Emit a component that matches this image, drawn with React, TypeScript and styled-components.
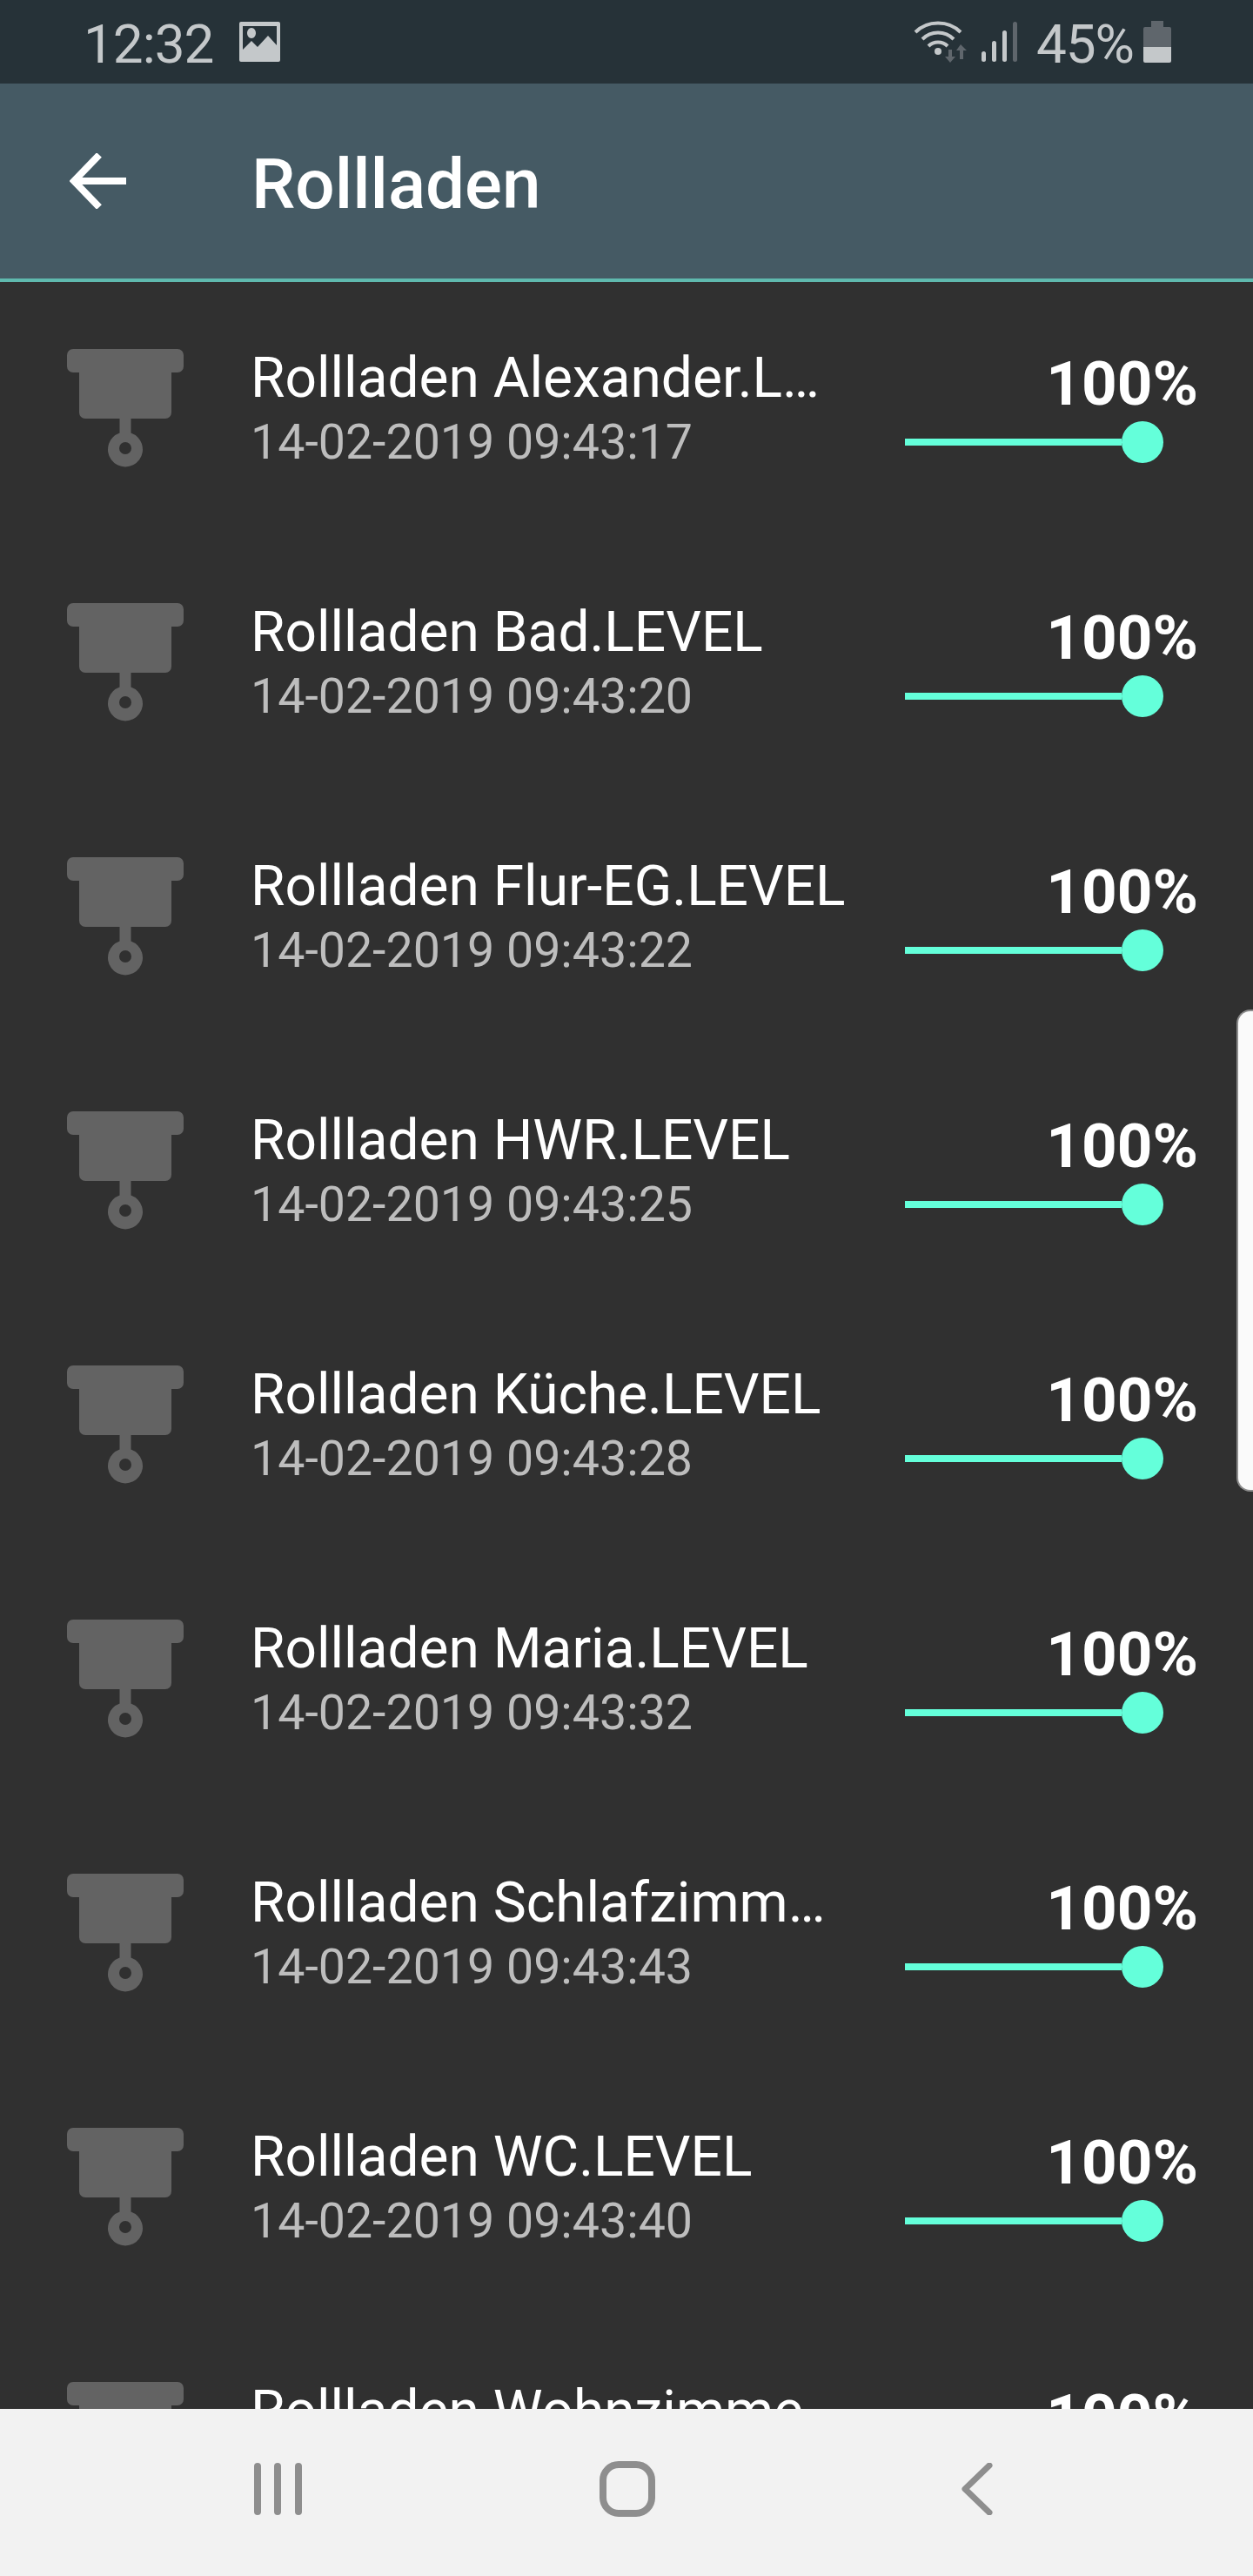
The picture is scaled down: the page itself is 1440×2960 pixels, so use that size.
import styled, { createGlobalStyle } from "styled-components";

const GlobalStyle = createGlobalStyle`
  html, body {
    margin: 0;
    padding: 0;
    background: #303030;
    font-family: Roboto, "Liberation Sans", sans-serif;
  }
`;

const Screen = styled.div`
  position: relative;
  width: 1440px;
  height: 2960px;
  display: flex;
  flex-direction: column;
  overflow: hidden;
  background: #303030;
`;

const StatusBar = styled.div`
  height: 96px;
  flex: none;
  display: flex;
  align-items: center;
  justify-content: space-between;
  padding: 0 94px 0 96px;
  background: #263238;
  color: #c4c8ca;
`;

const StatusGroup = styled.div`
  display: flex;
  align-items: center;
`;

const StatusText = styled.span`
  font-size: 62px;
  line-height: 96px;
  font-weight: 400;
  letter-spacing: -1px;
  padding-top: 5px;
`;

const StatusIcon = styled.svg<{ $left?: number; $right?: number }>`
  flex: none;
  margin-left: ${(p) => p.$left ?? 0}px;
  margin-right: ${(p) => p.$right ?? 0}px;
`;

const AppBar = styled.header`
  height: 224px;
  flex: none;
  display: flex;
  align-items: center;
  background: #455a64;
  border-bottom: 4px solid #5fb9ae;
  padding-left: 80px;
`;

const BackButton = styled.svg`
  width: 65px;
  height: 64px;
  margin-right: 144px;
`;

const Title = styled.h1`
  margin: 8px 0 0;
  font-size: 80px;
  line-height: 88px;
  font-weight: 500;
  color: #fff;
`;

const List = styled.main`
  flex: 1;
  min-height: 0;
  overflow: hidden;
`;

const Row = styled.div`
  height: 292px;
  display: flex;
  align-items: flex-start;
`;

const RowIcon = styled.svg`
  flex: none;
  width: 134px;
  height: 136px;
  margin: 77px 77px 0 77px;
`;

const RowText = styled.div`
  flex: none;
  width: 686px;
  padding-top: 74px;
`;

const RowName = styled.div`
  font-size: 64px;
  line-height: 74px;
  color: #fff;
  white-space: nowrap;
  overflow: hidden;
  text-overflow: ellipsis;
`;

const RowTime = styled.div`
  font-size: 55.5px;
  line-height: 74px;
  color: #bdbdbd;
  white-space: nowrap;
`;

const RowValue = styled.div`
  flex: 1;
  display: flex;
  flex-direction: column;
  align-items: flex-end;
  padding: 77px 63px 0 66px;
`;

const Percent = styled.div`
  font-size: 71px;
  line-height: 80px;
  font-weight: 700;
  color: #fff;
`;

const Slider = styled.div`
  align-self: stretch;
  display: flex;
  align-items: center;
  margin-right: 40px;
  margin-top: 3px;
`;

const SliderTrack = styled.div`
  flex: 1;
  height: 8px;
  background: #64ffda;
`;

const SliderThumb = styled.div`
  flex: none;
  width: 48px;
  height: 48px;
  border-radius: 50%;
  background: #64ffda;
`;

const NavBar = styled.nav`
  box-sizing: border-box;
  height: 192px;
  flex: none;
  display: flex;
  align-items: center;
  background: #f2f2f2;
  padding: 0 0 8px 292px;
`;

const NavIcon = styled.svg<{ $gap: number }>`
  flex: none;
  margin-right: ${(p) => p.$gap}px;
`;

const EdgeHandle = styled.div`
  position: absolute;
  top: 1160px;
  right: 0;
  width: 17px;
  height: 550px;
  background: #fafafa;
  border: 2px solid #8c8c8c;
  border-right: none;
  border-radius: 16px 0 0 16px;
`;

const rows = [
  { name: "Rollladen Alexander.LEVEL", time: "14-02-2019 09:43:17" },
  { name: "Rollladen Bad.LEVEL", time: "14-02-2019 09:43:20" },
  { name: "Rollladen Flur-EG.LEVEL", time: "14-02-2019 09:43:22" },
  { name: "Rollladen HWR.LEVEL", time: "14-02-2019 09:43:25" },
  { name: "Rollladen Küche.LEVEL", time: "14-02-2019 09:43:28" },
  { name: "Rollladen Maria.LEVEL", time: "14-02-2019 09:43:32" },
  { name: "Rollladen Schlafzimmer.LEVEL", time: "14-02-2019 09:43:43" },
  { name: "Rollladen WC.LEVEL", time: "14-02-2019 09:43:40" },
  { name: "Rollladen Wohnzimmer.LEVEL", time: "14-02-2019 09:43:46" },
];

function ShutterIcon() {
  return (
    <RowIcon viewBox="0 0 134 136">
      <path
        fill="#636363"
        fillRule="evenodd"
        d="M7 0h120a7 7 0 0 1 7 7v13a7 7 0 0 1-7 7h-7v46a7 7 0 0 1-7 7H73.500v16.500a20 20 0 1 1-13 0V80H21a7 7 0 0 1-7-7V27H7a7 7 0 0 1-7-7V7a7 7 0 0 1 7-7zM67 107a7 7 0 1 0 0 14a7 7 0 0 0 0-14z"
      />
    </RowIcon>
  );
}

export default function App() {
  return (
    <Screen>
      <GlobalStyle />
      <StatusBar>
        <StatusGroup>
          <StatusText>12:32</StatusText>
          <StatusIcon $left={30} width="47" height="46" viewBox="0 0 47 46">
            <path
              fill="#c4c8ca"
              fillRule="evenodd"
              d="M2 0h43a2 2 0 0 1 2 2v42a2 2 0 0 1-2 2H2a2 2 0 0 1-2-2V2a2 2 0 0 1 2-2zM4 5v27l10-10 7 7 12-13 10 11V5zM14 7a5 6 0 1 0 .01 0z"
            />
          </StatusIcon>
        </StatusGroup>
        <StatusGroup>
          <StatusIcon $right={12} width="66" height="48" viewBox="0 0 66 48">
            <g fill="none" stroke="#c4c8ca" strokeWidth="4">
              <path d="M2 13C16-1 40-1 54 13" />
              <path d="M10 21C20 11 36 11 46 21" />
              <path d="M17 29C23 23 33 23 39 29" />
            </g>
            <circle cx="28" cy="35" r="4" fill="#c4c8ca" />
            <path
              fill="#5f666c"
              d="M40 33h4v8h4l-6 7-6-7h4zM54 27l7 7h-4v10h-4V34h-4z"
            />
          </StatusIcon>
          <StatusIcon $right={22} width="41" height="46" viewBox="0 0 41 46">
            <rect x="0" y="34" width="5" height="12" rx="2.500" fill="#c4c8ca" />
            <rect x="12" y="22" width="5" height="24" rx="2.500" fill="#c4c8ca" />
            <rect x="24" y="10" width="5" height="36" rx="2.500" fill="#c4c8ca" />
            <rect x="36" y="0" width="5" height="46" rx="2.500" fill="#5f666c" />
          </StatusIcon>
          <StatusText>45%</StatusText>
          <StatusIcon $left={11} width="32" height="48" viewBox="0 0 32 48">
            <path fill="#5f666c" d="M9 0h14v7h7a2 2 0 0 1 2 2v21H0V9a2 2 0 0 1 2-2h7z" />
            <path fill="#c4c8ca" d="M0 30h32v16a2 2 0 0 1-2 2H2a2 2 0 0 1-2-2z" />
          </StatusIcon>
        </StatusGroup>
      </StatusBar>
      <AppBar>
        <BackButton viewBox="0 0 65 64" fill="none" stroke="#fff" strokeWidth="8">
          <path d="M65 32H5" />
          <path d="M34 2L5 32l29 30" />
        </BackButton>
        <Title>Rollladen</Title>
      </AppBar>
      <List>
        {rows.map((row) => (
          <Row key={row.name}>
            <ShutterIcon />
            <RowText>
              <RowName>{row.name}</RowName>
              <RowTime>{row.time}</RowTime>
            </RowText>
            <RowValue>
              <Percent>100%</Percent>
              <Slider>
                <SliderTrack />
                <SliderThumb />
              </Slider>
            </RowValue>
          </Row>
        ))}
      </List>
      <NavBar>
        <NavIcon $gap={342} width="55" height="60" viewBox="0 0 55 60" fill="#8e8e8e">
          <rect x="0" width="8" height="60" rx="4" />
          <rect x="23" width="8" height="60" rx="4" />
          <rect x="47" width="8" height="60" rx="4" />
        </NavIcon>
        <NavIcon $gap={352} width="64" height="64" viewBox="0 0 64 64" fill="none">
          <rect x="4" y="4" width="56" height="56" rx="18" stroke="#8e8e8e" strokeWidth="8" />
        </NavIcon>
        <NavIcon $gap={0} width="36" height="60" viewBox="0 0 36 60" fill="none">
          <path d="M32 3L4 30l28 27" stroke="#8e8e8e" strokeWidth="7" strokeLinecap="round" strokeLinejoin="round" />
        </NavIcon>
      </NavBar>
      <EdgeHandle />
    </Screen>
  );
}
